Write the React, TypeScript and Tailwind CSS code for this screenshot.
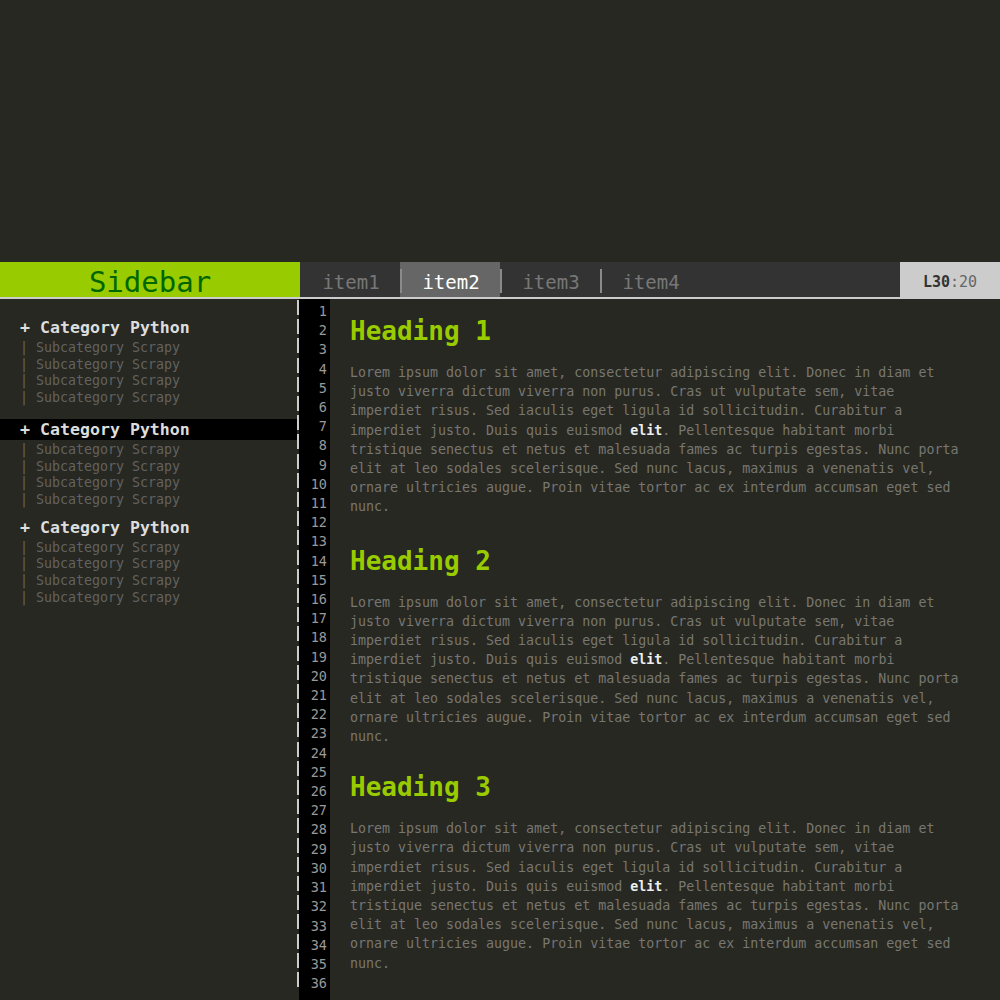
const lorem = (
  <>
    Lorem ipsum dolor sit amet, consectetur adipiscing elit. Donec in diam et justo viverra dictum viverra non purus. Cras ut
    vulputate sem, vitae imperdiet risus. Sed iaculis eget ligula id sollicitudin. Curabitur a imperdiet justo. Duis quis
    euismod <span className="font-bold text-[#eeeeee]">elit</span>. Pellentesque habitant morbi tristique senectus et netus et
    malesuada fames ac turpis egestas. Nunc porta elit at leo sodales scelerisque. Sed nunc lacus, maximus a venenatis vel,
    ornare ultricies augue. Proin vitae tortor ac ex interdum accumsan eget sed nunc.
  </>
);

const categories = [
  { active: false, margin: 'mt-0' },
  { active: true, margin: 'mt-[12px]' },
  { active: false, margin: 'mt-[8px]' },
];

const tabs = ['item1', 'item2', 'item3', 'item4'];

export default function App() {
  const lines = Array.from({ length: 36 }, (_, i) => i + 1);

  return (
    <div className="w-[1000px] h-[1000px] overflow-hidden bg-[#272822] font-['DejaVu_Sans_Mono',monospace]">
      {/* empty top area */}
      <div className="h-[262px]" />

      {/* Top bar */}
      <div className="flex h-[37px] border-b-2 border-[#cccccc]">
        <div className="w-[300px] bg-[#99cc00] flex items-center justify-center text-[29px] leading-none text-[#006600] pt-[5px]">
          Sidebar
        </div>
        <div className="flex-1 flex bg-[#333333]">
          {tabs.map((tab, i) => (
            <div
              key={tab}
              className={tab === 'item2' ? 'w-[100px] h-[35px] flex items-center bg-[#666666]' : 'w-[100px] h-[35px] flex items-center'}
            >
              <div className={i > 0 ? 'w-[2px] h-[24px] bg-[#8a8a8a] mt-[2px]' : 'w-[2px] h-[24px]'} />
              <div
                className={
                  tab === 'item2'
                    ? 'flex-1 text-center pt-[5px] text-white text-[19px] leading-none'
                    : 'flex-1 text-center pt-[5px] text-[#777777] text-[19px] leading-none'
                }
              >
                {tab}
              </div>
            </div>
          ))}
        </div>
        <div className="w-[100px] bg-[#cccccc] flex items-center justify-center text-[15px] leading-none pt-[5px]">
          <span className="font-bold text-[#333333]">L30</span>
          <span className="text-[#666666]">:20</span>
        </div>
      </div>

      {/* Body */}
      <div className="flex h-[701px]">
        {/* Sidebar */}
        <div className="w-[297px] pt-[18px]">
          {categories.map((cat, i) => (
            <div key={i} className={cat.margin}>
              <div
                className={
                  cat.active
                    ? 'pl-[20px] h-[21px] mb-[2px] leading-[21px] text-[16.6px] font-bold text-[#dddddd] bg-black whitespace-pre'
                    : 'pl-[20px] h-[21px] mb-[2px] leading-[21px] text-[16.6px] font-bold text-[#dddddd] whitespace-pre'
                }
              >
                + Category Python
              </div>
              {[0, 1, 2, 3].map((j) => (
                <div key={j} className="pl-[20px] text-[13.3px] leading-[16.7px] text-[#626260] whitespace-pre">
                  | Subcategory Scrapy
                </div>
              ))}
            </div>
          ))}
        </div>

        {/* Gutter with dashed left edge */}
        <div className="w-[2px] bg-[repeating-linear-gradient(to_bottom,#cccccc_0px,#cccccc_15px,transparent_15px,transparent_19.2px)] h-[691px] mt-[1px]" />
        <div className="w-[31px] bg-black pt-[3px] pr-[3px] text-right text-[13.5px] leading-[19.2px] text-[#999999]">
          {lines.map((n) => (
            <div key={n}>{n}</div>
          ))}
        </div>

        {/* Content */}
        <div className="flex-1 pl-[20px] pt-[17px]">
          {[1, 2, 3].map((n, i) => (
            <div key={n} className={i === 0 ? '' : i === 1 ? 'mt-[29px]' : 'mt-[26px]'}>
              <h1 className="text-[26px] leading-[31px] font-bold text-[#99cc00]">Heading {n}</h1>
              <p className="mt-[16px] w-[77ch] text-[13.3px] leading-[19.2px] text-[#777772]">{lorem}</p>
            </div>
          ))}
        </div>
      </div>
    </div>
  );
}
